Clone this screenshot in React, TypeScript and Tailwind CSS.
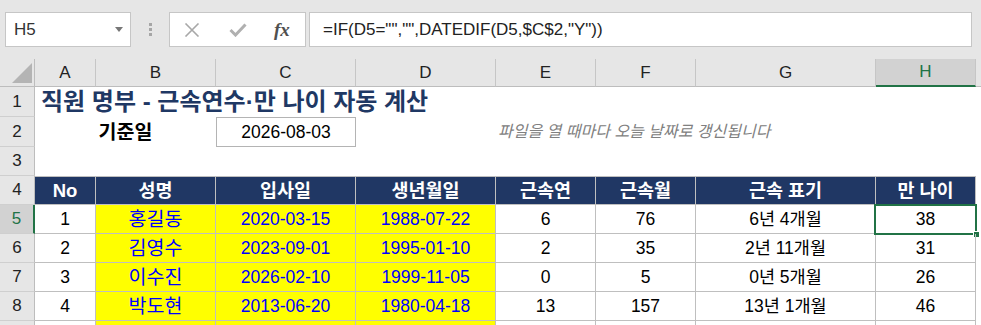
import React from 'react';

const COLS = 'grid grid-cols-[35px_61px_120px_140px_140px_100px_100px_180px_100px_1fr]';

interface Employee {
  no: number;
  name: string;
  joined: string;
  birth: string;
  years: number;
  months: number;
  label: string;
  age: number;
}

const EMPLOYEES: Employee[] = [
  { no: 1, name: '홍길동', joined: '2020-03-15', birth: '1988-07-22', years: 6, months: 76, label: '6년 4개월', age: 38 },
  { no: 2, name: '김영수', joined: '2023-09-01', birth: '1995-01-10', years: 2, months: 35, label: '2년 11개월', age: 31 },
  { no: 3, name: '이수진', joined: '2026-02-10', birth: '1999-11-05', years: 0, months: 5, label: '0년 5개월', age: 26 },
  { no: 4, name: '박도현', joined: '2013-06-20', birth: '1980-04-18', years: 13, months: 157, label: '13년 1개월', age: 46 },
];

const HEADERS = ['No', '성명', '입사일', '생년월일', '근속연', '근속월', '근속 표기', '만 나이'];
const LETTERS = ['A', 'B', 'C', 'D', 'E', 'F', 'G', 'H'];

const RowHead: React.FC<{ n?: number; active?: boolean }> = ({ n, active }) => (
  <div
    className={`flex items-center justify-center border-b border-[#cfcfcf] text-[17px] leading-[20px] ${
      active
        ? 'bg-[#d2d2d2] text-[#217346] border-r-2 border-r-[#217346]'
        : 'bg-[#e6e6e6] text-[#222] border-r border-r-[#bdbdbd]'
    }`}
  >
    {n}
  </div>
);

const cell = 'flex items-center justify-center border-r border-b border-[#bfbfbf] text-[17.5px] leading-[20px]';

export default function App() {
  return (
    <div className="w-[981px] h-[325px] overflow-hidden bg-white font-['Liberation_Sans','Noto_Sans_CJK_KR',sans-serif] text-black">
      {/* 이름 상자 + 수식 입력줄 */}
      <div className="h-[59px] bg-[#e6e6e6] flex items-start pt-[12px] pl-[5px] pr-[9px]">
        <div className="w-[126px] h-[35px] bg-white border border-[#c6c6c6] flex items-center justify-between pl-[8px] pr-[7px]">
          <span className="text-[17px] text-[#333]">H5</span>
          <svg width="8" height="5" viewBox="0 0 8 5">
            <polygon points="0,0 8,0 4,5" fill="#777" />
          </svg>
        </div>
        <div className="w-[38px] h-[35px] flex flex-col items-center justify-center gap-[2px]">
          <span className="w-[3px] h-[3px] bg-[#a6a6a6]" />
          <span className="w-[3px] h-[3px] bg-[#a6a6a6]" />
          <span className="w-[3px] h-[3px] bg-[#a6a6a6]" />
        </div>
        <div className="w-[137px] h-[35px] bg-white border border-[#c6c6c6] flex items-center pl-[14px]">
          <svg width="16" height="14" viewBox="0 0 16 14" className="shrink-0">
            <path d="M1.5 0.5 L14.5 13.5 M14.5 0.5 L1.5 13.5" stroke="#a8a8a8" strokeWidth="1.6" fill="none" />
          </svg>
          <svg width="18" height="14" viewBox="0 0 18 14" className="shrink-0 ml-[29px]">
            <path d="M1.5 7 L6.5 12 L16.5 1.5" stroke="#b0b0b0" strokeWidth="3" fill="none" />
          </svg>
          <span className="ml-[27px] font-['Liberation_Serif',serif] italic font-bold text-[19px] text-[#505050] leading-none">
            fx
          </span>
        </div>
        <div className="ml-[3px] flex-1 h-[35px] bg-white border border-[#c6c6c6] flex items-center pl-[13px]">
          <span className="text-[17px] text-[#222]">=IF(D5="","",DATEDIF(D5,$C$2,"Y"))</span>
        </div>
      </div>

      {/* 열 머리글 */}
      <div className={`${COLS} h-[28px]`}>
        <div className="bg-[#e6e6e6] border-r border-b border-[#bdbdbd] flex items-end justify-end pr-[2px] pb-[3px]">
          <svg width="20" height="20" viewBox="0 0 20 20">
            <polygon points="20,0 20,20 0,20" fill="#b4b4b4" />
          </svg>
        </div>
        {LETTERS.map((l) =>
          l === 'H' ? (
            <div
              key={l}
              className="bg-[#d2d2d2] border-r border-[#c6c6c6] border-b-2 border-b-[#217346] flex items-center justify-center text-[17px] text-[#217346]"
            >
              {l}
            </div>
          ) : (
            <div
              key={l}
              className="bg-[#e6e6e6] border-r border-b border-[#c6c6c6] border-b-[#bdbdbd] flex items-center justify-center text-[17px] text-[#222]"
            >
              {l}
            </div>
          )
        )}
        <div className="bg-[#e6e6e6] border-b border-[#bdbdbd]" />
      </div>

      {/* 1행: 제목 */}
      <div className={`${COLS} h-[30px]`}>
        <RowHead n={1} />
        <div className="col-span-9 flex items-end pl-[6px] pb-[1px]">
          <span className="text-[24px] leading-[28px] font-bold text-[#1f3864] whitespace-nowrap">
            직원 명부 - 근속연수·만 나이 자동 계산
          </span>
        </div>
      </div>

      {/* 2행: 기준일 */}
      <div className={`${COLS} h-[30px]`}>
        <RowHead n={2} />
        <div className="col-span-2 flex items-center justify-center text-[19.5px] leading-[22px] font-bold">기준일</div>
        <div className="border border-[#b4b4b4] flex items-center justify-center text-[17.5px] leading-[20px]">
          2026-08-03
        </div>
        <div />
        <div className="col-span-5 flex items-center pl-[2px]">
          <span className="text-[16px] leading-[18px] italic text-[#808080] whitespace-nowrap">
            파일을 열 때마다 오늘 날짜로 갱신됩니다
          </span>
        </div>
      </div>

      {/* 3행 */}
      <div className={`${COLS} h-[29px]`}>
        <RowHead n={3} />
      </div>

      {/* 4행: 표 머리글 */}
      <div className={`${COLS} h-[29px]`}>
        <RowHead n={4} />
        {HEADERS.map((h) => (
          <div key={h} className={`${cell} border-t bg-[#203764] text-white font-bold text-[18.5px]`}>
            {h}
          </div>
        ))}
      </div>

      {/* 데이터 */}
      {EMPLOYEES.map((e, i) => (
        <div key={e.no} className={`${COLS} h-[29px]`}>
          <RowHead n={i + 5} active={i === 0} />
          <div className={cell}>{e.no}</div>
          <div className={`${cell} bg-[#ffff00] text-[#0000ff] text-[19.5px]`}>{e.name}</div>
          <div className={`${cell} bg-[#ffff00] text-[#0000ff]`}>{e.joined}</div>
          <div className={`${cell} bg-[#ffff00] text-[#0000ff]`}>{e.birth}</div>
          <div className={cell}>{e.years}</div>
          <div className={cell}>{e.months}</div>
          <div className={cell}>{e.label}</div>
          <div className={`${cell} relative`}>
            {e.age}
            {i === 0 && (
              <>
                <span className="absolute -left-[2px] -top-[1px] -right-[2px] -bottom-[2px] border-2 border-[#217346]" />
                <span className="absolute -right-[5px] -bottom-[5px] w-[7px] h-[7px] bg-[#217346] border border-white" />
              </>
            )}
          </div>
        </div>
      ))}

      {/* 9행 (잘림) */}
      <div className={`${COLS} h-[29px]`}>
        <RowHead />
        <div className={cell} />
        <div className={`${cell} bg-[#ffff00]`} />
        <div className={`${cell} bg-[#ffff00]`} />
        <div className={`${cell} bg-[#ffff00]`} />
        <div className={cell} />
        <div className={cell} />
        <div className={cell} />
        <div className={cell} />
      </div>
    </div>
  );
}
